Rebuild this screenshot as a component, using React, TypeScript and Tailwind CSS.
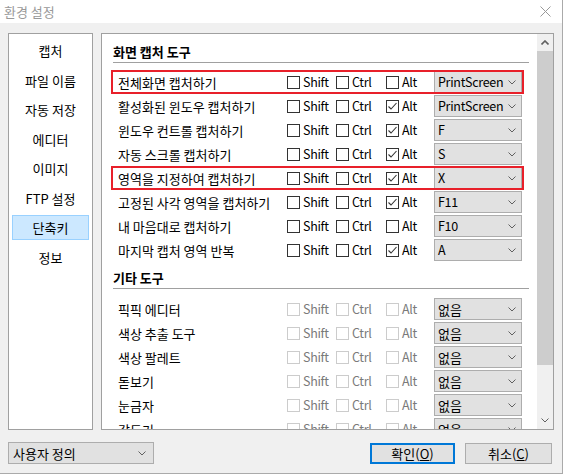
import React from 'react';

type Row = { label: string; alt: boolean; key: string; mark?: boolean };

const captureRows: Row[] = [
    { label: '전체화면 캡처하기', alt: false, key: 'PrintScreen', mark: true },
    { label: '활성화된 윈도우 캡처하기', alt: true, key: 'PrintScreen' },
    { label: '윈도우 컨트롤 캡처하기', alt: true, key: 'F' },
    { label: '자동 스크롤 캡처하기', alt: true, key: 'S' },
    { label: '영역을 지정하여 캡처하기', alt: true, key: 'X', mark: true },
    { label: '고정된 사각 영역을 캡처하기', alt: true, key: 'F11' },
    { label: '내 마음대로 캡처하기', alt: false, key: 'F10' },
    { label: '마지막 캡처 영역 반복', alt: true, key: 'A' },
];

const otherRows = ['픽픽 에디터', '색상 추출 도구', '색상 팔레트', '돋보기', '눈금자', '각도기'];

const navItems = ['캡처', '파일 이름', '자동 저장', '에디터', '이미지', 'FTP 설정', '단축키', '정보'];

const Chevron: React.FC<{ up?: boolean; className?: string }> = ({ up, className }) => (
    <svg width="8" height="5" viewBox="0 0 8 5" className={className}>
        <polyline
            points={up ? '0.5,4.5 4,1 7.5,4.5' : '0.5,0.5 4,4 7.5,0.5'}
            fill="none"
            stroke="currentColor"
            strokeWidth={up ? 1.6 : 1}
        />
    </svg>
);

const Check: React.FC<{ checked?: boolean; disabled?: boolean; label: string; width: string }> = ({ checked, disabled, label, width }) => (
    <div className={`flex items-center ${width}`}>
        <div className={`w-[13px] h-[13px] border bg-white flex items-center justify-center ${disabled ? 'border-[#cccccc]' : 'border-[#333333]'}`}>
            {checked && (
                <svg width="11" height="11" viewBox="0 0 11 11">
                    <polyline points="1.5,5.5 4,8 9.5,2" fill="none" stroke="#333333" strokeWidth="1.1" />
                </svg>
            )}
        </div>
        <span className={`ml-[3px] text-[12.5px] tracking-[-0.3px] ${disabled ? 'text-[#7a7a7a]' : 'text-black'}`}>{label}</span>
    </div>
);

const Select: React.FC<{ value: string; latin?: boolean; className?: string }> = ({ value, latin, className }) => (
    <div className={`flex items-center justify-between bg-[#e1e1e1] border border-[#adadad] pl-[3px] pr-[5px] ${className ?? ''}`}>
        <span className={latin ? 'text-[12.5px] tracking-[-0.3px]' : ''}>{value}</span>
        <Chevron className="text-[#606060]" />
    </div>
);

const ShortcutRow: React.FC<{ label: string; alt?: boolean; keyName: string; latin?: boolean; mark?: boolean; disabled?: boolean }> = ({
    label,
    alt,
    keyName,
    latin,
    mark,
    disabled,
}) => (
    <div className={`flex items-center h-[24px] -ml-[2px] w-[413px] ${mark ? 'outline-2 -outline-offset-2 outline-[#e8202a]' : ''}`}>
        <div className="w-[176px] pl-[7px] whitespace-nowrap">{label}</div>
        <Check label="Shift" width="w-[49px]" disabled={disabled} />
        <Check label="Ctrl" width="w-[50px]" disabled={disabled} />
        <Check label="Alt" width="w-[48px]" checked={alt} disabled={disabled} />
        <Select value={keyName} latin={latin} className="w-[88px] h-[22px]" />
    </div>
);

const Section: React.FC<{ title: string; className?: string; children: React.ReactNode }> = ({ title, className, children }) => (
    <div className={className}>
        <div className="h-[16px] flex items-center font-bold">{title}</div>
        <div className="mt-[3px] h-px w-[416px] bg-[#a0a0a0]" />
        {children}
    </div>
);

export default function App() {
    return (
        <div
            className="w-[563px] h-[474px] bg-[#f0f0f0] border-r border-b border-[#aaaaaa] text-[13px] leading-none text-black overflow-hidden"
            style={{ fontFamily: '"Noto Sans CJK KR", sans-serif' }}
        >
            {/* title bar */}
            <div className="h-[23px] bg-white flex items-center justify-between pl-[4px] pr-[11px]">
                <span className="text-[#999999]">환경 설정</span>
                <svg width="11" height="11" viewBox="0 0 11 11">
                    <line x1="0.5" y1="0.5" x2="10.5" y2="10.5" stroke="#999999" strokeWidth="1" />
                    <line x1="10.5" y1="0.5" x2="0.5" y2="10.5" stroke="#999999" strokeWidth="1" />
                </svg>
            </div>

            <div className="flex pt-[10px] pl-[8px]">
                {/* nav list */}
                <div className="w-[85px] h-[397px] bg-white border border-[#a0a0a0] pt-[2px]">
                    {navItems.map((item) => (
                        <div key={item} className="h-[29.5px] flex items-center justify-center">
                            {item === '단축키' ? (
                                <div className="w-[77px] h-[25px] bg-[#cce8ff] border border-[#99d1ff] flex items-center justify-center">{item}</div>
                            ) : (
                                <span>{item}</span>
                            )}
                        </div>
                    ))}
                </div>

                {/* settings panel */}
                <div className="ml-[8px] w-[453px] h-[397px] bg-white border border-[#a0a0a0] flex">
                    <div className="flex-1 overflow-hidden pl-[11px] pt-[9px]">
                        <Section title="화면 캡처 도구">
                            <div className="mt-[7px]">
                                {captureRows.map((r) => (
                                    <ShortcutRow key={r.label} label={r.label} alt={r.alt} keyName={r.key} latin mark={r.mark} />
                                ))}
                            </div>
                        </Section>
                        <Section title="기타 도구" className="mt-[7px]">
                            <div className="mt-[8px]">
                                {otherRows.map((label) => (
                                    <ShortcutRow key={label} label={label} keyName="없음" disabled />
                                ))}
                            </div>
                        </Section>
                    </div>
                    {/* scrollbar */}
                    <div className="w-[16px] bg-[#f0f0f0] flex flex-col">
                        <div className="h-[17px] flex items-center justify-center text-[#606060]">
                            <Chevron up />
                        </div>
                        <div className="h-[314px] bg-[#cdcdcd]" />
                        <div className="flex-1" />
                        <div className="h-[17px] flex items-center justify-center text-[#606060]">
                            <Chevron />
                        </div>
                    </div>
                </div>
            </div>

            {/* footer */}
            <div className="flex items-center mt-[12px] pl-[8px] pr-[10px]">
                <Select value="사용자 정의" className="w-[146px] h-[22px] pl-[4px] pr-[7px]" />
                <div className="ml-auto flex gap-[10px]">
                    <button className="w-[85px] h-[21px] bg-[#e1e1e1] border-2 border-[#0078d7] flex items-center justify-center">
                        확인(<span className="underline">O</span>)
                    </button>
                    <button className="w-[87px] h-[21px] bg-[#e1e1e1] border border-[#adadad] flex items-center justify-center">
                        취소(<span className="underline">C</span>)
                    </button>
                </div>
            </div>
        </div>
    );
}
